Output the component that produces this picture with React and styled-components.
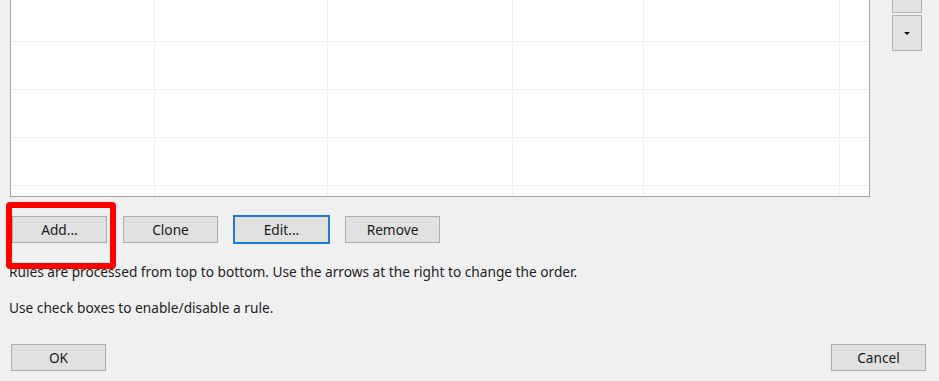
import React from "react";
import styled, { createGlobalStyle } from "styled-components";

const GlobalStyle = createGlobalStyle`
  html, body {
    margin: 0;
    padding: 0;
    background: #f0f0f0;
  }
  body {
    font-family: "Noto Sans", "Liberation Sans", sans-serif;
    font-size: 13.7px;
    color: #1e1e1e;
  }
`;

const columns = [144, 173, 185, 131, 196, 29];
const rows = [0, 1, 2, 3, 4];

const App = () => {
  return (
    <Dialog>
      <GlobalStyle />
      <TopArea>
        <ListFrame>
          <Grid>
            {rows.map((r) =>
              columns.map((w, c) => <Cell key={`${r}-${c}`} $last={c === columns.length - 1} />)
            )}
          </Grid>
        </ListFrame>
        <Arrows>
          <ArrowButton />
          <ArrowButton>
            <Caret />
          </ArrowButton>
        </Arrows>
      </TopArea>

      <ButtonRow>
        <Highlighted>
          <Button>Add...</Button>
          <RedBox />
        </Highlighted>
        <Button>Clone</Button>
        <Button $focused>Edit...</Button>
        <Button>Remove</Button>
      </ButtonRow>

      <Note>Rules are processed from top to bottom. Use the arrows at the right to change the order.</Note>
      <Note $second>Use check boxes to enable/disable a rule.</Note>

      <Footer>
        <Button>OK</Button>
        <Button>Cancel</Button>
      </Footer>
    </Dialog>
  );
};

export default App;

const Dialog = styled.div`
  width: 939px;
  height: 381px;
  overflow: hidden;
  display: flex;
  flex-direction: column;
`;

const TopArea = styled.div`
  display: flex;
  align-items: flex-start;
  height: 197px;
`;

const ListFrame = styled.div`
  margin-left: 10px;
  width: 858px;
  height: 196px;
  background: #fff;
  border: 1px solid #a3a3a3;
  border-top: none;
  overflow: hidden;
`;

const Grid = styled.div`
  display: grid;
  grid-template-columns: ${columns.map((w) => `${w}px`).join(" ")};
  grid-auto-rows: 48px;
  margin-top: -6px;
`;

const Cell = styled.div`
  border-bottom: 1px solid #efefef;
  border-right: ${({ $last }) => ($last ? "none" : "1px solid #f1f1f1")};
  box-sizing: border-box;
`;

const Arrows = styled.div`
  display: flex;
  flex-direction: column;
  gap: 2px;
  margin-left: 22px;
  margin-top: -23px;
`;

const ArrowButton = styled.div`
  width: 28px;
  height: 34px;
  background: #e3e3e3;
  border: 1px solid #b2b2b2;
  display: flex;
  align-items: center;
  justify-content: center;
`;

const Caret = styled.div`
  width: 0;
  height: 0;
  border-left: 3px solid transparent;
  border-right: 3px solid transparent;
  border-top: 3px solid #111;
`;

const ButtonRow = styled.div`
  display: flex;
  gap: 16px;
  margin-top: 19px;
  padding-left: 12px;
`;

const Highlighted = styled.div`
  position: relative;
  display: flex;
`;

const RedBox = styled.div`
  position: absolute;
  left: -6px;
  top: -14px;
  width: 98px;
  height: 55px;
  border: 6px solid #ff0000;
  border-radius: 4px;
`;

const Button = styled.div`
  width: 93px;
  height: 25px;
  box-sizing: content-box;
  background: #e1e1e1;
  border: ${({ $focused }) => ($focused ? "2px solid #1f7ad3" : "1px solid #adadad")};
  margin: ${({ $focused }) => ($focused ? "-1px" : "0")};
  display: flex;
  align-items: center;
  justify-content: center;
  font-size: 13.7px;
  line-height: 16px;
  color: #1a1a1a;
`;

const Note = styled.div`
  padding-left: 9px;
  margin-top: ${({ $second }) => ($second ? "20px" : "21px")};
  line-height: 16px;
  white-space: nowrap;
`;

const Footer = styled.div`
  display: flex;
  justify-content: space-between;
  padding: 0 13px 0 11px;
  margin-top: 28px;
`;
